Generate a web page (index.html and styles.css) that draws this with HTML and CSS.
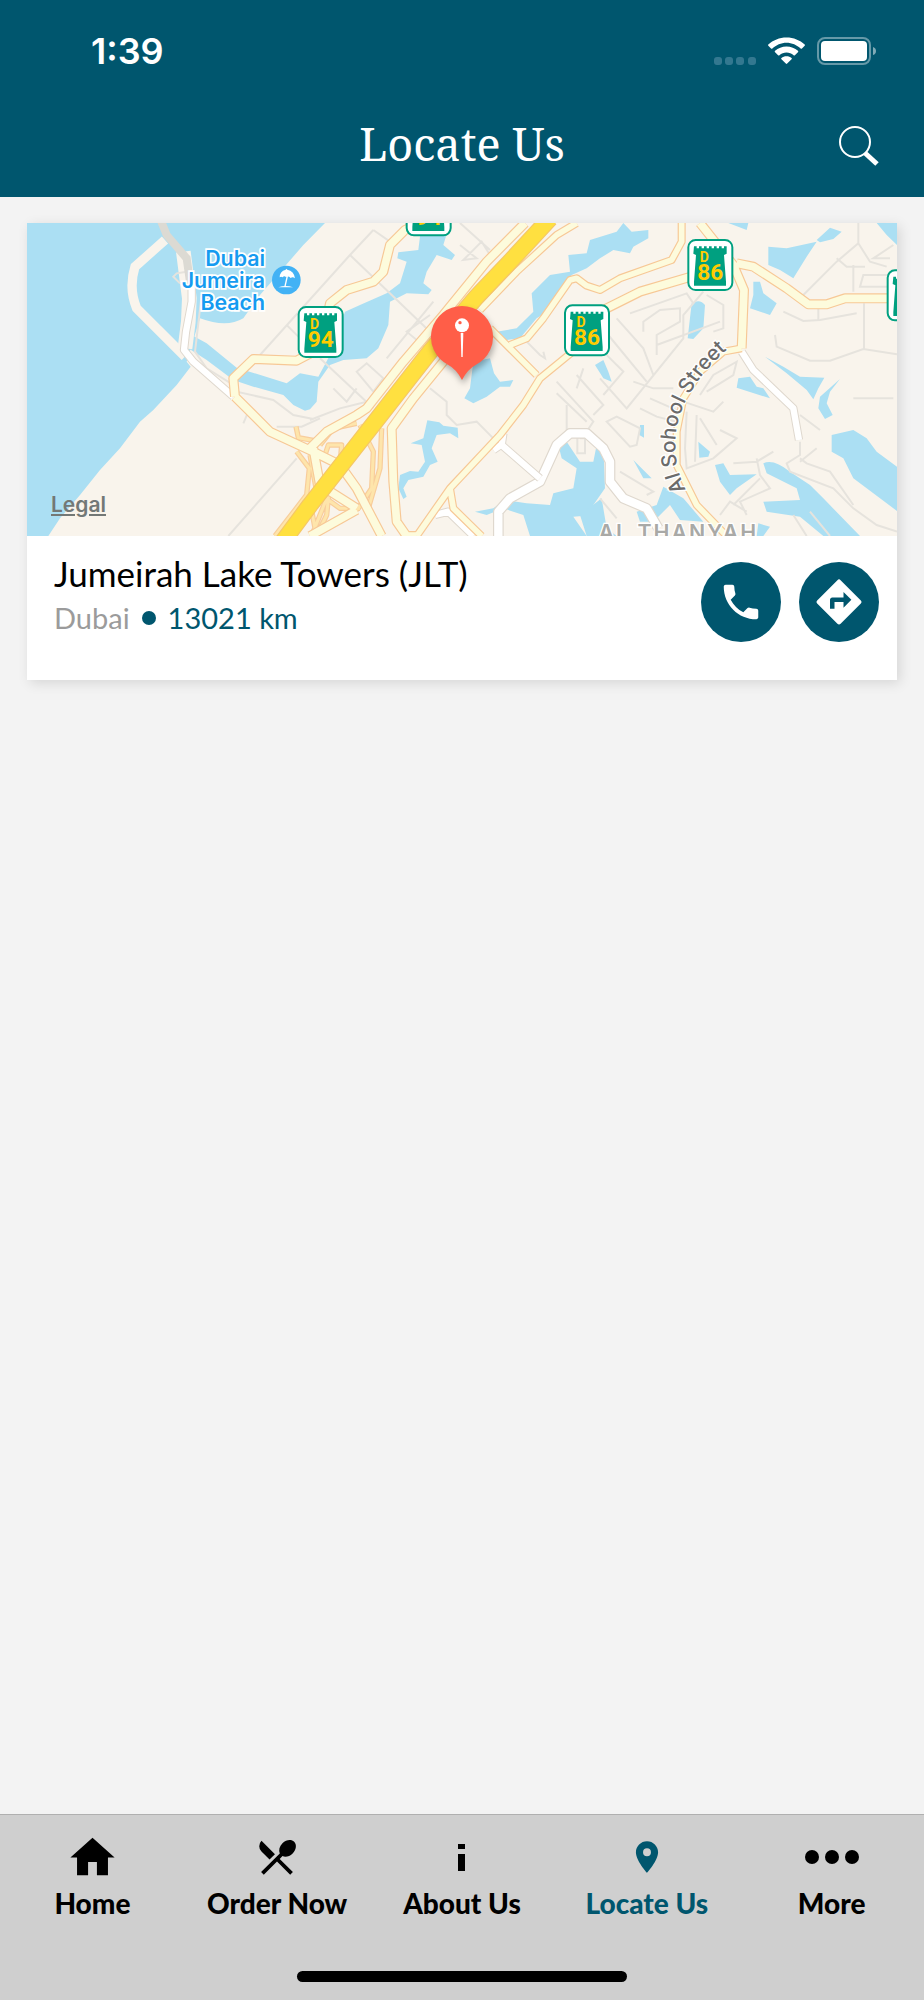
FILE: index.html
```html
<!DOCTYPE html>
<html lang="en">
<head>
  <meta charset="UTF-8">
  <meta name="viewport" content="width=device-width, initial-scale=1">
  <title>Locate Us</title>
  <link rel="stylesheet" href="styles.css">
</head>
<body>
  <header class="header">
    <div class="status-bar">
      <span class="time">1:39</span>
      <div class="status-icons">
        <svg class="signal" viewBox="0 0 42 8" width="42" height="8">
          <rect x="0" width="8" height="8" rx="3"/>
          <rect x="11" width="8" height="8" rx="3"/>
          <rect x="22" width="8" height="8" rx="3"/>
          <rect x="34" width="8" height="8" rx="3"/>
        </svg>
        <svg viewBox="0 0 110 80" width="37" height="27">
          <path fill="#fff" d="M55 1C34 1 15 9 1 22q-2 2 0 4l8 8q2 2 4 0C24 24 39 17 55 17s31 7 42 17q2 2 4 0l8-8q2-2 0-4C95 9 76 1 55 1zM55 28c-13 0-25 5-34 13q-2 2 0 4l9 9q2 2 4 0c6-5 13-8 21-8s15 3 21 8q2 2 4 0l9-9q2-2 0-4c-9-8-21-13-34-13zM55 57c-6 0-11 2-15 5q-2 2 0 4l13 13q2 2 4 0l13-13q2-2 0-4c-4-3-9-5-15-5z"/>
        </svg>
        <svg viewBox="0 0 60 28" width="60" height="28">
          <rect x="1" y="1" width="52" height="26" rx="7" fill="none" stroke="#fff" stroke-opacity=".4" stroke-width="2"/>
          <rect x="4" y="4" width="46" height="20" rx="4" fill="#fff"/>
          <path fill="#fff" fill-opacity=".5" d="M56 10q3 1 3 4t-3 4z"/>
        </svg>
      </div>
    </div>
    <div class="title-bar">
      <h1>Locate Us</h1>
      <button class="search" aria-label="Search">
        <svg viewBox="0 0 40 40" width="40" height="40">
          <circle cx="16" cy="16" r="15" fill="none" stroke="#fff" stroke-width="2"/>
          <path d="M26 27L38 38" stroke="#fff" stroke-width="5"/>
        </svg>
      </button>
    </div>
  </header>

  <main>
    <article class="card">
      <div class="map">
        <svg class="map-art" viewBox="21 24 2610 939" preserveAspectRatio="xMidYMid slice">
          <defs>
            <g id="ramps">
              <path d="M828 635L835 668 900 680M765 963L860 840 868 760 830 710M900 690L940 640 1010 625M880 950L940 800 1010 690 1060 640 1080 600M1085 640L1080 760 1045 880M930 800L920 900 890 963M1060 620L1100 560 1230 430 1240 400M870 720L890 830 960 880 1020 880M915 720L925 690 965 690 960 750M1020 630L1060 710 1055 820 1015 880 960 920M870 860L885 940"/>
            </g>
            <g id="yellow-thin">
              <path d="M1985 24L1985 80 1955 135 1800 190 1740 225 1700 212 1670 190 1650 195 1570 310 1520 370 1470 390M1410 340L1470 400 1550 480M1290 820L1300 880 1385 963M2165 400L2110 410 2040 470 1990 550 1970 650 1970 750 2030 870 2120 963M1190 963L1290 820 1440 660 1510 570 1560 490 1670 400 1740 290M1670 24L1610 60 1490 170 1380 285"/>
            </g>
            <g id="yellow-wide">
              <path d="M645 545L640 490 700 432 830 437 900 400 930 265 980 225 1060 200 1090 170 1110 90 1155 45 1200 24M645 545L750 650 880 710 960 750 1010 820 1085 963M880 700L900 810 1010 880M870 963L1010 885M1515 24L1400 140 1270 300 1150 440 1040 580 1010 600 920 650 870 700M1290 415L1180 550 1115 640 1120 800 1130 920 1160 963 1190 963M1740 290L1860 230 2030 180M2040 24L2140 150 2172 225 2165 400M2150 145L2200 155 2300 220 2365 268 2420 268 2475 250 2640 250"/>
            </g>
            <g id="white-roads">
              <path d="M515 210L515 260 498 350 492 405 520 440 640 545M1450 655L1445 690 1560 790M1420 705L1450 685M1245 900L1285 890 1360 963M2165 410L2200 465 2320 580 2337 675"/>
            </g>
            <g id="white-loop">
              <path d="M1435 963L1435 890 1470 850 1560 800 1610 690 1650 655 1700 655 1750 700 1770 740 1770 800 1810 850 1880 880 1915 940"/>
            </g>
            <g id="highway">
              <path d="M785 985L870 870 1050 640 1230 410 1370 245 1470 140 1590 10"/>
            </g>
            <g id="shield">
              <rect x="-66" y="-75" width="132" height="150" rx="22" fill="#fff" stroke="#00a080" stroke-width="6"/>
              <path fill="#00a080" d="M-49-56h8v6h7v-6h8v6h7v-6h8v6h7v-6h8v6h7v-6h8v6h7v-6h8v6h7v-6h8v22l-8 4 6 80v12h-96v-12l6-80-8-4z"/>
              <text class="shield-letter" x="-18" y="-10">D</text>
            </g>
            <path id="street-curve" d="M1998 825Q1955 740 1970 640Q1990 520 2125 400"/>
          </defs>

          <rect x="21" y="24" width="2610" height="939" fill="#f9f4ec"/>

          <!-- sea, creek and lakes -->
          <g class="water">
            <path d="M21 24H915L850 90 720 240 670 310Q620 340 540 310L500 440 512 455 470 510 400 585 360 620 300 700 240 765 180 840 120 910 85 963H21z"/>
            <path d="M505 355L560 385 650 458 800 505 840 475 895 485 930 420 975 290 1020 270 1100 235 1140 205 1160 140 1132 130 1135 112 1195 105 1205 24H1290L1270 90 1305 120 1295 135 1250 120 1220 170 1210 205 1235 225 1225 238 1160 235 1110 260 1105 330 1075 400 1040 430 970 435 930 450 895 500 890 560 870 583 855 587 820 570 790 540 700 515 640 495 560 435 505 400z"/>
            <path d="M1360 440L1410 430 1422 475 1440 500 1480 495 1470 515 1440 515 1400 545 1360 565 1333 550 1350 520z"/>
            <path d="M1222 616L1258 622 1270 632 1313 638 1315 670 1290 655 1250 660 1235 700 1253 740 1230 750 1210 785 1165 795 1150 820 1160 845 1150 852 1135 820 1140 780 1170 768 1195 770 1215 740 1205 690 1172 685 1210 670z"/>
            <path d="M1430 350L1490 340 1540 290 1535 235 1590 180 1650 170 1645 120 1700 115 1710 75 1790 50 1810 24 1835 50 1885 45 1885 70 1840 95 1830 115 1780 105 1740 130 1700 160 1655 180 1620 220 1600 280 1550 310 1500 370 1460 375z"/>
            <path d="M1365 890L1420 880 1455 855 1520 865 1590 870 1600 835 1660 820 1670 760 1625 730 1615 690 1640 680 1680 740 1720 740 1730 690 1750 690 1755 820 1720 870 1720 900 1660 905 1700 963H1530L1510 900 1450 880 1400 900z"/>
            <path d="M1680 900L1745 850 1760 940 1790 963H1700zM1850 890L1910 870 1930 815 1990 850 2050 920 1980 915 1950 870 1900 920 1860 920zM1725 450L1750 435 1765 470 1775 500 1750 490z"/>
            <path d="M2245 95L2300 100 2390 80 2360 125 2320 190 2280 165 2245 150zM2390 75L2430 38 2465 50 2440 72 2400 82zM2200 200L2220 200 2230 235 2270 265 2250 300 2190 280 2200 240zM2125 24H2185L2180 45zM2570 24H2631V90L2600 60z"/>
            <path d="M2015 265Q2040 250 2055 270L2050 340 2020 372 2003 370zM2235 425L2290 455 2340 485 2413 488 2395 520 2380 553 2360 525 2300 475zM2460 492L2400 545 2395 580 2415 612 2438 600 2420 565 2430 530zM2155 490L2190 485 2210 515 2230 520 2250 550 2150 518z"/>
            <path d="M2435 660L2500 645 2540 670 2570 710 2631 755V888L2560 835 2500 790 2470 730 2435 710zM2085 750L2110 745 2130 780 2210 778 2150 820 2130 840 2100 800zM2230 745Q2260 730 2310 770L2370 810 2410 850 2520 963H2410L2340 905 2240 890 2230 860 2340 855 2330 820 2240 775zM2035 680L2070 710 2065 725 2038 728zM1840 735L1895 790 1870 790zM1860 630L1872 630 1872 668 1858 660zM2215 925L2250 935 2230 963H2210z"/>
          </g>

          <!-- land strips around the lagoon -->
          <path d="M435 75L345 155Q325 220 350 280L495 425" fill="none" stroke="#f9f4ec" stroke-width="28"/>
          <path d="M490 110L508 250 505 320 495 400" fill="none" stroke="#f9f4ec" stroke-width="44"/>

          <!-- side streets -->
          <g class="streets">
            <path d="M545 240L525 410 560 460 640 510 650 530 760 555 820 600 880 612M770 635L845 635 900 610M625 963L830 730M720 420L990 120 1060 45M990 120L1230 350M800 330L835 365M500 170L470 175 460 185 480 205M670 625L685 590"/>
            <path d="M1060 45L1110 80M1320 24L1410 105M1320 90L1370 130 1330 135 1385 80 1410 120 1380 150M1230 300L1160 350 1220 400M1240 260L1100 430M900 430L1060 580M1010 470L1040 445 1090 490 1060 530zM940 520L980 560 1010 520M870 615L960 580 1040 560M1230 520L1280 560 1280 600 1310 630 1370 620 1420 670M1520 380L1560 420 1575 430 1570 410M1610 535L1700 620M1610 500L1720 620 1700 650M1640 570L1640 650M1670 480L1750 570 1720 600M1670 520L1690 460M1680 670H1695V715H1672V670"/>
            <path d="M1830 295L2000 235 2020 265M1870 350L1870 320 1920 285 1980 280 1980 320 1910 360 1910 420M1790 310L1870 400 1900 480M1740 330L1880 500M1740 400L1810 470 1750 540M2050 230L1990 300 1990 370 1820 580 1740 490M2060 240L2110 270 2110 340 2080 350M1910 390L2100 320M1840 500L1900 520 1960 520M1860 580L1910 605 1970 620M1890 550L1980 590M1990 560L2080 590 2110 560M2040 540L2080 480 2150 440 2140 480 2060 530M1760 620L1790 605 1860 640 1850 690 1830 695zM2000 590L1995 700 2000 760 2080 730 2150 670 2100 645M2030 600L2025 740M2040 610L2090 690"/>
            <path d="M2350 240L2450 140 2515 85 2515 24M2450 130L2480 155H2535M2500 230V150M2515 85L2550 140 2600 155M2620 90L2560 130H2610M2631 180H2530L2520 215H2631M2290 290L2350 318 2400 315 2510 295M2395 280V315M2532 265V400M2265 360L2270 395 2370 437 2430 437 2530 402 2631 418M2500 550H2620M2340 600L2400 645M2340 680V720L2300 745 2310 770 2440 820 2500 880 2570 930 2631 950M2340 730L2360 745 2430 770 2500 870M2140 745L2210 740 2260 710M2210 730L2220 780 2250 820 2160 860 2180 900M2140 870L2220 790M2100 900L2130 860 2180 890M2370 890L2430 963M2320 900L2360 963M1800 770L1900 830 1880 840M1740 850L1790 910M2340 740L2390 700"/>
          </g>
          <path d="M420 10L440 60 500 130 512 215" fill="none" stroke="#dcdad3" stroke-width="24"/>

          <use href="#white-loop" stroke="#dfd8ce" stroke-width="32"/>
          <use href="#white-loop" stroke="#fff" stroke-width="25"/>
          <use href="#white-roads" stroke="#dfd8ce" stroke-width="25"/>
          <use href="#white-roads" stroke="#fff" stroke-width="19"/>
          <use href="#ramps" stroke="#f8cd9b" stroke-width="16"/>
          <use href="#ramps" stroke="#fee5ab" stroke-width="9"/>
          <use href="#yellow-thin" stroke="#f7c896" stroke-width="24"/>
          <use href="#yellow-wide" stroke="#f7c896" stroke-width="30"/>
          <use href="#yellow-thin" stroke="#fdfbdc" stroke-width="17"/>
          <use href="#yellow-wide" stroke="#fdfbdc" stroke-width="23"/>
          <use href="#highway" stroke="#f5c766" stroke-width="52"/>
          <use href="#highway" stroke="#ffe040" stroke-width="45"/>

          <!-- labels -->
          <g class="beach-label">
            <text x="735" y="152">Dubai</text>
            <text x="735" y="218">Jumeira</text>
            <text x="735" y="285">Beach</text>
          </g>
          <circle cx="799" cy="195" r="43" fill="#42b2f5"/>
          <g fill="#fff" transform="translate(799 195)">
            <path d="M-20-8Q-20-26-2-31L0-34 3-31Q23-27 26-5Q19-11 13-6Q6-13-1-9Q-7-14-11-8Q-16-12-20-8z"/>
            <path d="M3-12L-4 19" stroke="#fff" stroke-width="4"/>
            <path d="M-24 22Q-2 14 20 22z"/>
          </g>
          <text class="street-label"><textPath href="#street-curve">Al Sohool Street</textPath></text>
          <text class="area-label" x="1975" y="974">AL THANYAH</text>

          <use href="#shield" x="902" y="351"/>
          <text class="shield-number" x="902" y="395">94</text>
          <use href="#shield" x="1226" y="-14"/>
          <text class="shield-number" x="1226" y="30">94</text>
          <use href="#shield" x="1701" y="346"/>
          <text class="shield-number" x="1701" y="390">86</text>
          <use href="#shield" x="2071" y="150"/>
          <text class="shield-number" x="2071" y="194">86</text>
          <use href="#shield" x="2669" y="241"/>

          <!-- selected place -->
          <g class="pin">
            <path fill="#ff5e48" d="M1326 273A93 93 0 0 0 1284 449Q1309 462 1326 495Q1343 462 1368 449A93 93 0 0 0 1326 273z"/>
            <circle cx="1326" cy="331" r="21" fill="#fff"/>
            <circle cx="1320" cy="323" r="5" fill="#ff5e48"/>
            <path d="M1322 354H1330L1328 426H1324z" fill="#fff"/>
          </g>
        </svg>
        <a class="legal" href="#">Legal</a>
      </div>
      <div class="card-body">
        <div class="place">
          <h2>Jumeirah Lake Towers (JLT)</h2>
          <p><span class="city">Dubai</span><span class="dot"></span><span>13021 km</span></p>
        </div>
        <div class="actions">
          <button aria-label="Call">
            <svg viewBox="0 0 24 24" width="46" height="46"><path d="M6.62 10.79c1.44 2.83 3.76 5.14 6.59 6.59l2.2-2.2c.27-.27.67-.36 1.02-.24 1.12.37 2.33.57 3.57.57.55 0 1 .45 1 1V20c0 .55-.45 1-1 1-9.39 0-17-7.61-17-17 0-.55.45-1 1-1h3.5c.55 0 1 .45 1 1 0 1.25.2 2.45.57 3.57.11.35.03.74-.25 1.02l-2.2 2.2z"/></svg>
          </button>
          <button aria-label="Directions">
            <svg viewBox="0 0 24 24" width="54" height="54"><path d="M21.71 11.29l-9-9a.996.996 0 0 0-1.41 0l-9 9a.996.996 0 0 0 0 1.41l9 9c.39.39 1.02.39 1.41 0l9-9a.996.996 0 0 0 0-1.41zM14 14.5V12h-4v3H8v-4c0-.55.45-1 1-1h5V7.5l3.5 3.5-3.5 3.5z"/></svg>
          </button>
        </div>
      </div>
    </article>
  </main>

  <footer class="tab-bar">
    <nav>
      <a href="#">
        <span class="icon"><svg viewBox="0 0 24 24" width="53" height="53"><path d="M10 20v-6h4v6h5v-8h3L12 3 2 12h3v8z"/></svg></span>
        Home
      </a>
      <a href="#">
        <span class="icon"><svg viewBox="0 0 24 24" width="46" height="46"><path d="M8.1 13.34l2.83-2.83L3.91 3.5a4.008 4.008 0 0 0 0 5.66l4.19 4.18zm6.78-1.81c1.53.71 3.68.21 5.27-1.38 1.91-1.91 2.28-4.65.81-6.12-1.46-1.46-4.2-1.1-6.12.81-1.59 1.59-2.09 3.74-1.38 5.27L3.7 19.87l1.41 1.41L12 14.41l6.88 6.88 1.41-1.41L13.41 13l1.47-1.47z"/></svg></span>
        Order Now
      </a>
      <a href="#">
        <span class="icon"><svg viewBox="0 0 8 28" width="8" height="28"><path d="M0 1h7v5H0zM0 11h7v17H0z"/></svg></span>
        About Us
      </a>
      <a href="#" class="active">
        <span class="icon"><svg viewBox="0 0 24 24" width="38" height="38"><path d="M12 2C8.13 2 5 5.13 5 9c0 5.25 7 13 7 13s7-7.75 7-13c0-3.87-3.13-7-7-7zm0 9.5a2.5 2.5 0 0 1 0-5 2.5 2.5 0 0 1 0 5z"/></svg></span>
        Locate Us
      </a>
      <a href="#">
        <span class="icon"><svg viewBox="0 0 54 16" width="54" height="16"><circle cx="7" cy="8" r="7"/><circle cx="27" cy="8" r="7"/><circle cx="47" cy="8" r="7"/></svg></span>
        More
      </a>
    </nav>
    <div class="home-indicator"></div>
  </footer>
</body>
</html>
```
FILE: styles.css
```css
* {
  box-sizing: border-box;
}
body {
  margin: 0;
  min-height: 100vh;
  display: flex;
  flex-direction: column;
  background: #f3f3f3;
  font-family: Lato, sans-serif;
  color: #000;
}
h1, h2, p {
  margin: 0;
  font-weight: normal;
}
button {
  border: 0;
  padding: 0;
  cursor: pointer;
}
svg {
  display: block;
}

/* header */
.header {
  background: #00566e;
  color: #fff;
}
.status-bar {
  height: 94px;
  padding: 7px 47px 0 91px;
  display: flex;
  justify-content: space-between;
  align-items: center;
}
.time {
  font-family: Inter, sans-serif;
  font-size: 36px;
  font-weight: 600;
}
.status-icons {
  display: flex;
  align-items: center;
  gap: 12px;
}
.signal {
  fill: #337890;
  align-self: flex-end;
}
.title-bar {
  height: 103px;
  padding: 0 45px;
  display: grid;
  grid-template-columns: 1fr auto 1fr;
  align-items: center;
}
.title-bar h1 {
  grid-column: 2;
  font-family: "Noto Serif", "Liberation Serif", serif;
  font-size: 45px;
  line-height: 60px;
  padding-bottom: 3px;
}
.search {
  justify-self: end;
  background: none;
}

/* location card */
main {
  flex: 1;
  padding: 26px 27px;
}
.card {
  background: #fff;
  box-shadow: 3px 3px 12px rgba(0,0,0,0.12);
}
.map {
  position: relative;
}
.map-art {
  width: 100%;
  height: 313px;
}
.water {
  fill: #abdff3;
}
.streets {
  fill: none;
  stroke: #e6e3dd;
  stroke-width: 6;
}
.map-art use {
  fill: none;
  stroke-linejoin: round;
}
.beach-label {
  fill: #159bf0;
  stroke: #fff;
  stroke-width: 10;
  paint-order: stroke;
  font-family: Inter, sans-serif;
  font-size: 64px;
  font-weight: 600;
  text-anchor: end;
}
.street-label {
  fill: #6b6b6b;
  stroke: #fff;
  stroke-width: 8;
  paint-order: stroke;
  font-family: Inter, sans-serif;
  font-size: 62px;
  font-weight: 500;
}
.area-label {
  fill: #a9a9a6;
  stroke: #fff;
  stroke-width: 8;
  paint-order: stroke;
  font-family: Inter, sans-serif;
  font-size: 64px;
  font-weight: 600;
  letter-spacing: 6px;
  text-anchor: middle;
}
.shield-letter, .shield-number {
  fill: #fc0;
  stroke: none;
  font-family: Roboto, sans-serif;
  font-weight: bold;
  text-anchor: middle;
}
.shield-letter {
  font-size: 42px;
}
.shield-number {
  font-size: 68px;
}
.pin {
  filter: drop-shadow(4px 12px 10px rgba(0,0,0,0.3));
}
.legal {
  position: absolute;
  left: 24px;
  bottom: 18px;
  font-family: Inter, sans-serif;
  font-size: 21px;
  font-weight: 600;
  line-height: 26px;
  color: #737876;
}
.card-body {
  padding: 14px 18px 38px 27px;
  display: flex;
  justify-content: space-between;
}
.place h2 {
  font-size: 35px;
  line-height: 46px;
}
.place p {
  display: flex;
  align-items: center;
  font-size: 29px;
  line-height: 44px;
  color: #00566e;
}
.city {
  color: #9b9b9b;
}
.dot {
  width: 14px;
  height: 14px;
  margin: 0 12px;
  border-radius: 50%;
  background: #00566e;
}
.actions {
  display: flex;
  gap: 18px;
  padding-top: 12px;
}
.actions button {
  width: 80px;
  height: 80px;
  border-radius: 50%;
  background: #00566e;
  display: flex;
  align-items: center;
  justify-content: center;
}
.actions svg {
  fill: #fff;
}

/* bottom tabs */
.tab-bar {
  height: 186px;
  padding-bottom: 18px;
  background: #cfcfcf;
  border-top: 1px solid #b0b0b0;
  display: flex;
  flex-direction: column;
  align-items: center;
  justify-content: space-between;
}
.tab-bar nav {
  width: 100%;
  padding-top: 14px;
  display: grid;
  grid-template-columns: repeat(5, 1fr);
}
.tab-bar a {
  display: flex;
  flex-direction: column;
  align-items: center;
  font-size: 28px;
  font-weight: 900;
  line-height: 36px;
  color: #000;
  text-decoration: none;
}
.tab-bar a.active {
  color: #00566e;
}
.icon {
  height: 56px;
  display: flex;
  align-items: center;
}
.icon svg {
  fill: currentColor;
}
.home-indicator {
  width: 330px;
  height: 11px;
  border-radius: 6px;
  background: #000;
}
```
